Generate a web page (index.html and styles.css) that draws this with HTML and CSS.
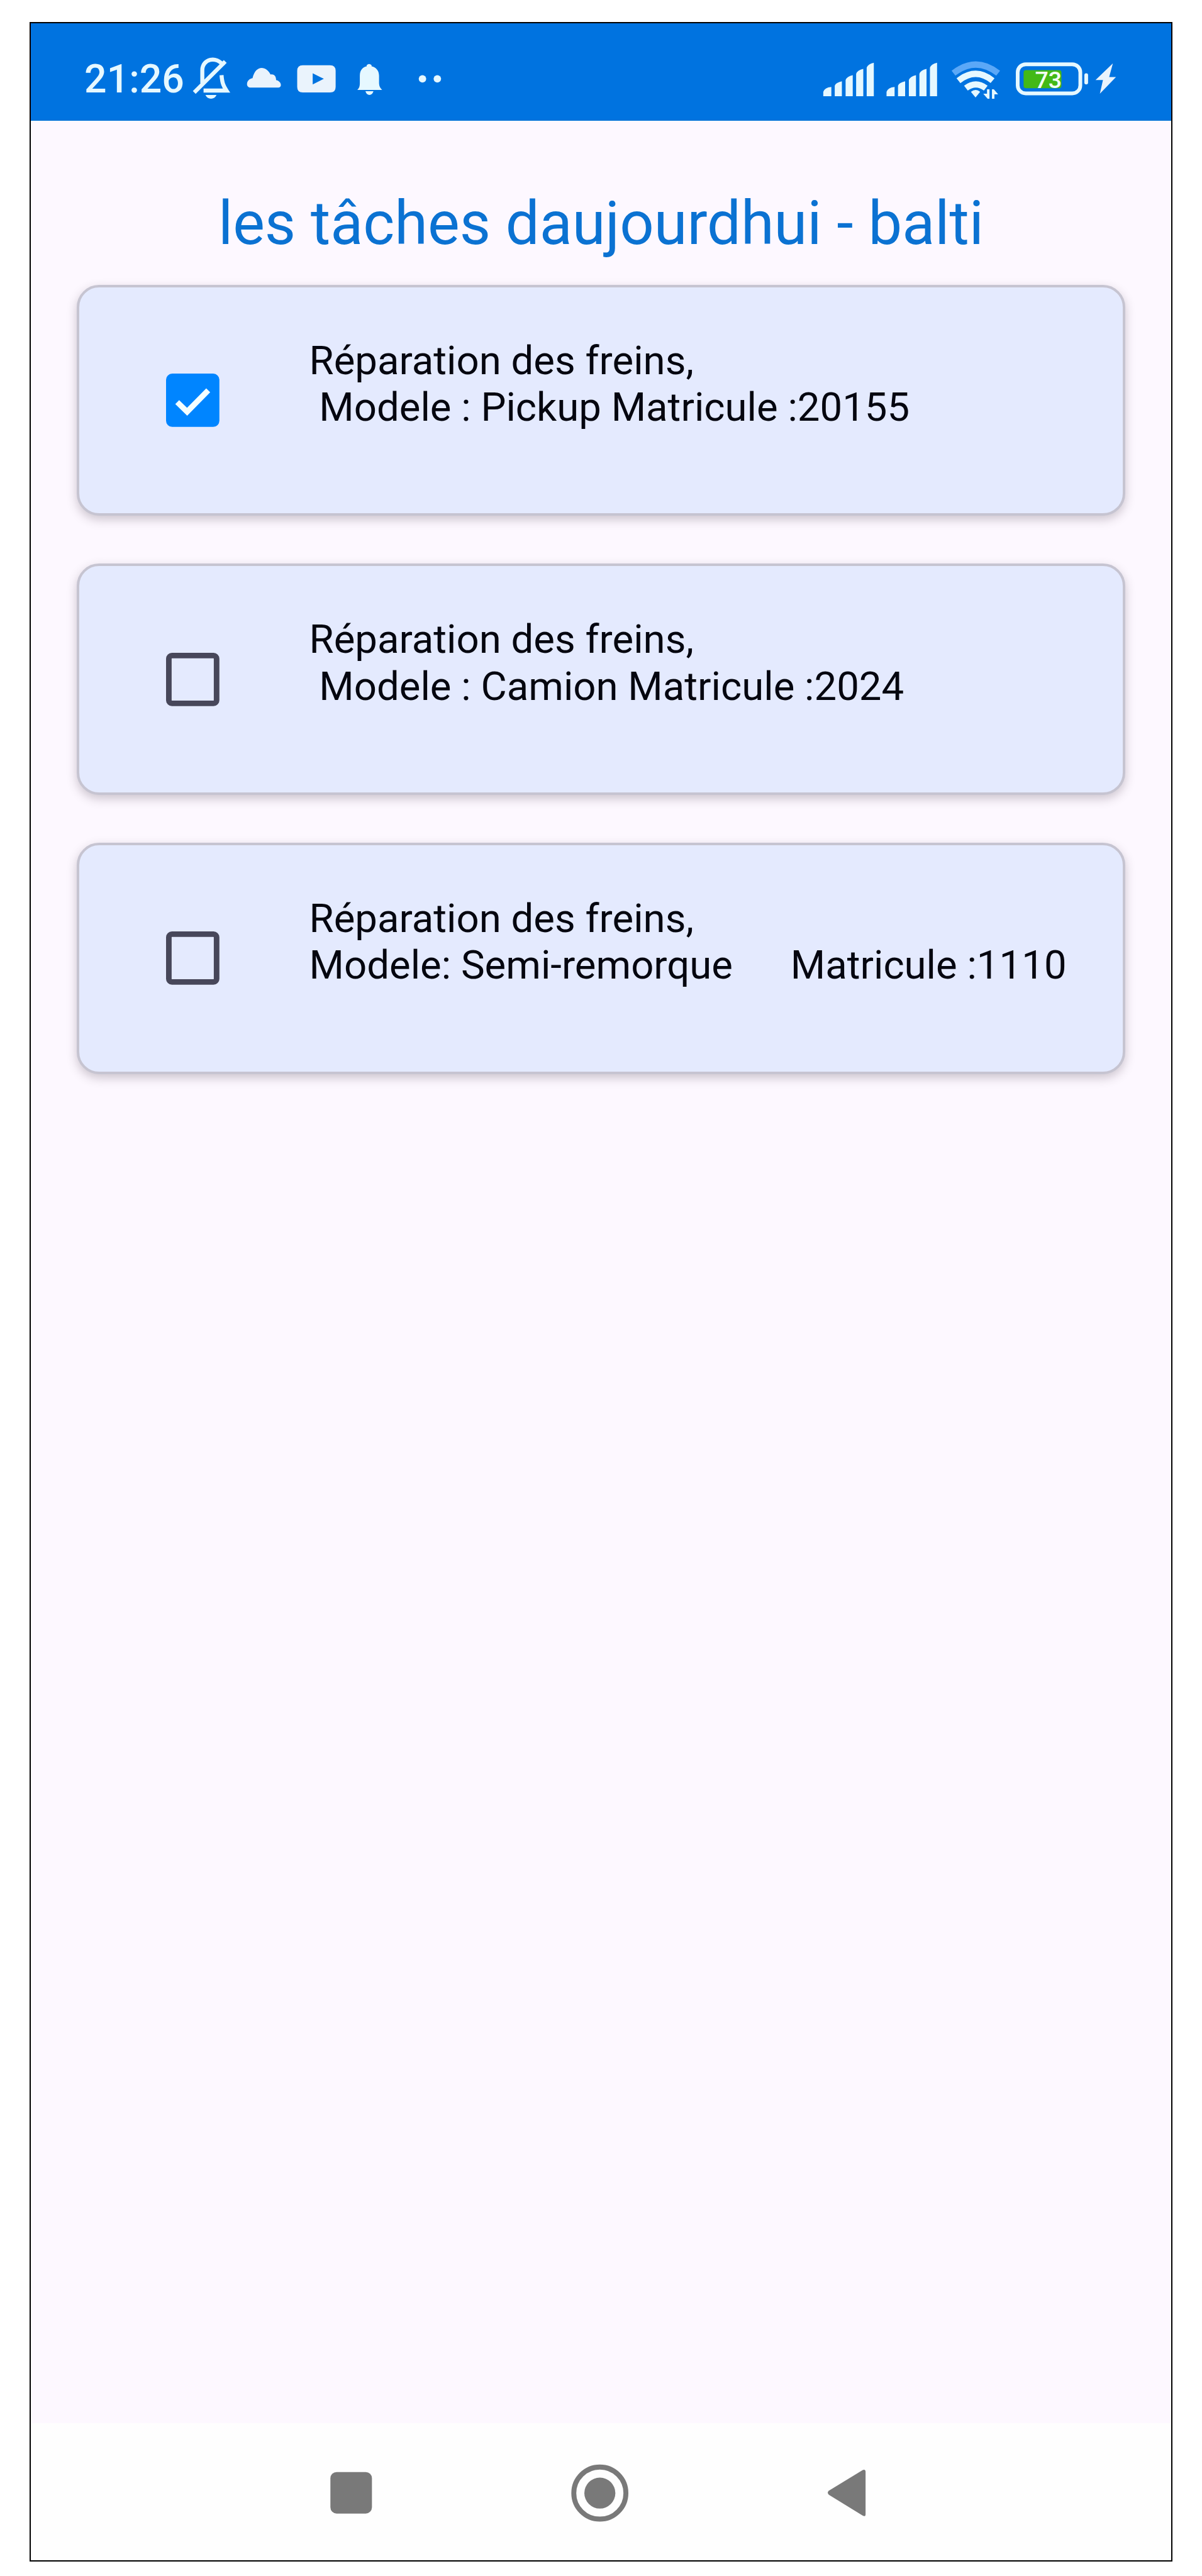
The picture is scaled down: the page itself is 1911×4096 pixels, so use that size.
FILE: index.html
```html
<!DOCTYPE html>
<html lang="fr">
<head>
<meta charset="utf-8">
<title>Les tâches</title>
<link rel="stylesheet" href="styles.css">
</head>
<body>
<div class="phone">
  <header class="status">
    <span class="time">21:26</span>
    <svg class="notifications" viewBox="300 80 430 90">
      <g fill="none" stroke="#e6f8ff" stroke-width="6.5">
        <path d="M326 134V113c0-18 23-24 34-7M357 121c1 14 4 19 8 25H328M313 149L363 99"/>
      </g>
      <path fill="#e6f8ff" d="M331 153h18q-3 6-9 6t-9-6z"/>
      <path fill="#eaf3fc" d="M403 141c-7 0-7-13 4-15 5-22 22-20 29-6 7-1 9 4 9 9 9 2 10 12 4 12z"/>
      <path fill="#eaf3fc" fill-rule="evenodd" d="M488 105h44q9 0 9 9v26q0 9-9 9h-44q-9 0-9-9v-26q0-9 9-9zM504 118v18l18-9z"/>
      <path fill="#e6f8ff" d="M576 145c3-3 4-6 4-11v-12c0-9 5-14 11-15v-2q4-4 8 0v2c6 1 12 6 12 15v12c0 5 2 8 5 11zM589 147h13q-2 6-6.500 6t-6.500-6z"/>
      <circle cx="681" cy="127" r="6" fill="#e6f8ff"/>
      <circle cx="705" cy="127" r="6" fill="#e6f8ff"/>
    </svg>
    <svg class="system" viewBox="1320 80 500 90">
      <g fill="#e6f8ff">
        <path id="bars" d="M1329 155v-7q2-7 13-8v15zM1347.500 155v-17q2-5 11.500-7v24zM1365 155v-26q2-6 11.500-8v34zM1382 155v-36q2-6 11.500-8v44zM1399 155v-46q2-6 11.500-8v54z"/>
        <use href="#bars" x="102"/>
      </g>
      <g fill="none" stroke="#e6f8ff" stroke-width="10">
        <path stroke="#5ba8f7" d="M1539 118Q1575 90 1611 118"/>
        <path d="M1547 130Q1575 108 1602 130"/>
        <path d="M1559 142Q1575 130 1591 142"/>
      </g>
      <path fill="#e6f8ff" d="M1567 148q8-6 15 0l-7.500 9zM1597 144v15h-3l-7-8h6v-7zM1601 159v-15h3l7 8h-6v7z"/>
      <rect x="1642.500" y="103.500" width="101" height="47" rx="13" fill="none" stroke="#e6f8ff" stroke-width="6"/>
      <rect x="1652" y="113" width="61" height="29" rx="4" fill="#43b916"/>
      <text class="charge" x="1670.500" y="142">73</text>
      <rect x="1750" y="118" width="6" height="18" rx="3" fill="#e6f8ff"/>
      <path fill="#eaf3fc" d="M1796 102l-28 27h12l-5 22 26-27h-11z"/>
    </svg>
  </header>
  <main class="screen">
    <h1 class="title">les tâches daujourdhui - balti</h1>
    <ul class="tasks">
      <li class="task">
        <svg class="check" viewBox="0 0 86 86"><rect width="86" height="86" rx="10" fill="#0085ff"/><path d="M18 46L34 61.500 68 27" fill="none" stroke="#f4ffff" stroke-width="9"/></svg>
        <p class="text">Réparation des freins,<br>&nbsp;Modele : Pickup Matricule :20155</p>
      </li>
      <li class="task">
        <svg class="check" viewBox="0 0 86 86"><rect x="4.500" y="4.500" width="77" height="77" rx="5" fill="none" stroke="#47475a" stroke-width="9"/></svg>
        <p class="text">Réparation des freins,<br>&nbsp;Modele : Camion Matricule :2024</p>
      </li>
      <li class="task">
        <svg class="check" viewBox="0 0 86 86"><rect x="4.500" y="4.500" width="77" height="77" rx="5" fill="none" stroke="#47475a" stroke-width="9"/></svg>
        <p class="text">Réparation des freins,<br>Modele: Semi-remorque<span class="gap"></span>Matricule :1110</p>
      </li>
    </ul>
  </main>
  <footer class="nav">
    <svg class="buttons" viewBox="480 3960 960 120" fill="#797979">
      <rect x="533" y="3986" width="67" height="67" rx="10"/>
      <circle cx="967.500" cy="4020" r="42" fill="none" stroke="#797979" stroke-width="8"/>
      <circle cx="967.500" cy="4020" r="25"/>
      <path d="M1337 4016l54-33q5-2 5 3v68q0 5-5 2l-54-33q-4-4 0-7z"/>
    </svg>
  </footer>
</div>
</body>
</html>
```
FILE: styles.css
```css
/* 1rem is 100 design units */
html { font-size: 98.6px; background: #fff; }
body { margin: 0; font-family: Roboto, sans-serif; }
.phone {
  box-sizing: border-box;
  width: 18.42rem;
  height: 40.96rem;
  margin: .35rem 0 0 .48rem;
  border: 2px solid #000;
  background: #fdf8ff;
  display: flex;
  flex-direction: column;
}
.status {
  height: 1.58rem;
  box-sizing: border-box;
  padding: .46rem .7rem 0 .86rem;
  background: #0073e0;
  border-bottom: 2px solid #0073d8;
  display: flex;
  align-items: flex-start;
}
.time {
  width: 1.64rem;
  color: #e6f8ff;
  font-size: .635rem;
  line-height: .9rem;
  font-weight: 500;
  white-space: nowrap;
}
.notifications { width: 4.3rem; height: .9rem; flex: none; margin-top: -.03rem; }
.system { width: 5rem; height: .9rem; flex: none; margin-left: auto; margin-top: -.03rem; }
.charge { font: 500 38px Roboto, sans-serif; fill: #f2fff5; }
.screen { flex: 1; padding: .98rem .74rem 0; }
.title {
  margin: 0;
  height: 1.66rem;
  text-align: center;
  font-size: .97rem;
  line-height: 1.35rem;
  font-weight: 400;
  color: #0b72d2;
  white-space: nowrap;
}
.tasks { list-style: none; margin: 0; padding: 0; display: flex; flex-direction: column; gap: .77rem; }
.task {
  box-sizing: border-box;
  height: 3.73rem;
  padding-left: 1.395rem;
  border: 4px solid #c6c4d1;
  border-radius: .36rem;
  background: #e4eafe;
  box-shadow: 0 6px 16px rgba(60, 45, 60, .25);
  display: flex;
  align-items: center;
}
.check { width: .86rem; height: .86rem; flex: none; }
.text {
  margin: 0 0 0 1.45rem;
  padding-bottom: .52rem;
  font-size: .644rem;
  line-height: .753rem;
  color: #05060f;
  white-space: nowrap;
}
.gap { display: inline-block; width: .93rem; }
.nav { height: 2.21rem; background: #fefefe; display: flex; }
.buttons { width: 9.6rem; height: 1.2rem; margin: .52rem 0 0 4.3rem; }
```
